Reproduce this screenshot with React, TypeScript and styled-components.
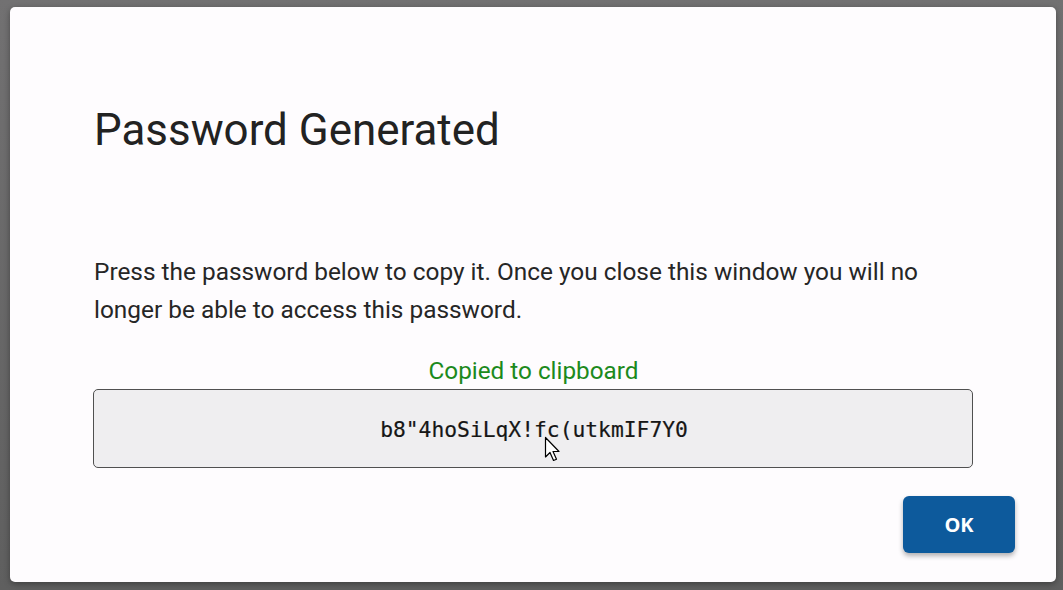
import React from "react";
import styled, { createGlobalStyle } from "styled-components";

const Global = createGlobalStyle`
  html, body { margin: 0; padding: 0; }
  body {
    width: 1063px;
    height: 590px;
    overflow: hidden;
    font-family: Roboto, "Noto Sans", sans-serif;
  }
`;

const Backdrop = styled.div`
  width: 1063px;
  height: 590px;
  box-sizing: border-box;
  padding: 7px 7px 8px 10px;
  background: linear-gradient(#727172, #5f5f5f);
  display: flex;
`;

const Dialog = styled.div`
  flex: 1;
  background: #fefcfe;
  border-radius: 5px;
  box-shadow: 0 2px 6px rgba(0, 0, 0, 0.35);
  box-sizing: border-box;
  padding: 93px 41px 29px 84px;
  display: flex;
  flex-direction: column;
`;

const Title = styled.h1`
  margin: 0;
  font-family: Roboto, sans-serif;
  font-weight: 400;
  font-size: 43.9px;
  line-height: 60px;
  color: #222222;
`;

const Body = styled.p`
  margin: 93px 42px 0 0;
  font-family: Roboto, sans-serif;
  font-size: 24.4px;
  line-height: 38px;
  color: #262626;
`;

const Status = styled.div`
  margin: 28px 42px 0 0;
  text-align: center;
  font-family: Roboto, sans-serif;
  font-size: 24.3px;
  line-height: 28px;
  color: #1c8a1c;
`;

const PasswordBox = styled.div`
  position: relative;
  margin: 4px 42px 0 -1px;
  height: 79px;
  box-sizing: border-box;
  border: 1.5px solid #505050;
  border-radius: 5px;
  background: #efeef0;
  display: flex;
  align-items: center;
  justify-content: center;
  font-family: "DejaVu Sans Mono", monospace;
  font-size: 21.3px;
  color: #161616;
  padding-left: 2px;
  padding-top: 2px;
  -webkit-text-stroke: 0.2px #161616;
`;

const Cursor = styled.svg`
  position: absolute;
  left: 450px;
  top: 46px;
`;

const Footer = styled.div`
  margin-top: 28px;
  display: flex;
  justify-content: flex-end;
`;

const OkButton = styled.button`
  width: 112px;
  height: 57px;
  border: none;
  border-radius: 6px;
  background: #0d5a9c;
  color: #ffffff;
  font-family: "Open Sans", sans-serif;
  font-weight: 700;
  font-size: 20px;
  box-shadow: 0 3px 5px rgba(0, 0, 0, 0.3);
  cursor: pointer;
`;

export default function App() {
  return (
    <>
      <Global />
      <Backdrop>
        <Dialog>
          <Title>Password Generated</Title>
          <Body>
            Press the password below to copy it. Once you close this window you will no longer be able to
            access this password.
          </Body>
          <Status>Copied to clipboard</Status>
          <PasswordBox>
            b8"4hoSiLqX!fc(utkmIF7Y0
            <Cursor width="20" height="28" viewBox="0 0 20 28">
              <path d="M1.5 1.5 L1.5 21 L6 16.5 L9.5 24.5 L12.5 23.2 L9 15.5 L15 15.5 Z" fill="#ffffff" stroke="#000000" strokeWidth="1.2" strokeLinejoin="round" />
            </Cursor>
          </PasswordBox>
          <Footer>
            <OkButton>OK</OkButton>
          </Footer>
        </Dialog>
      </Backdrop>
    </>
  );
}
